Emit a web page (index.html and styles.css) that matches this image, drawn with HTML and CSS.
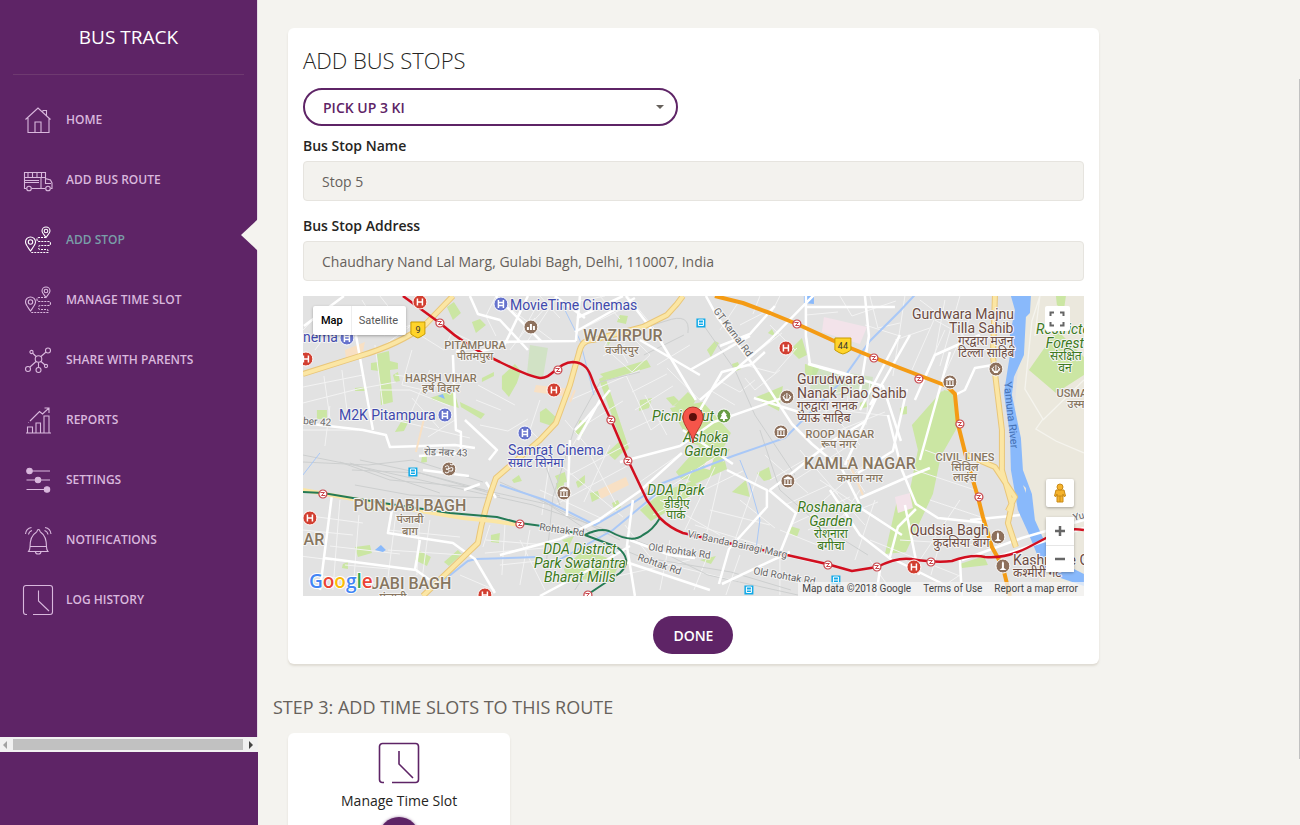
FILE: index.html
```html
<!DOCTYPE html>
<html lang="en">
<head>
<meta charset="utf-8">
<title>Bus Track</title>
<link rel="stylesheet" href="styles.css">
</head>
<body>
<div class="layout">
  <aside class="sidebar">
    <div class="sidebar-scroll">
      <a class="brand" href="#">BUS TRACK</a>
      <ul class="nav">
        <li><a class="nav-link" href="#"><svg class="nav-icon" viewBox="0 0 32 32"><path d="M3.500 15.500 16 4l12.500 11.500M6 14v14.500h21V14M13 28.500V18h6v10.500M21 7.500V6.500h3.500V11.500"/></svg>HOME</a></li>
        <li><a class="nav-link" href="#"><svg class="nav-icon" viewBox="0 0 32 32"><path d="M4 24.500H2.500V8.500h21v6l5 1.500 1.500 3v5.500h-1M9.500 24.500h13.500M2.500 13.500h21M6 9v4M10.500 9v4M15 9v4M19.500 9v4M3 16.500h14M3 18.500h14M19 14v10M23.500 14.500v5H29"/><circle cx="7" cy="24.500" r="2.300"/><circle cx="26" cy="24.500" r="2.300"/></svg>ADD BUS ROUTE</a></li>
        <li class="active"><a class="nav-link" href="#"><svg class="nav-icon" viewBox="0 0 32 32"><path d="M8.500 27C5.500 22.500 3.500 20.500 3.500 18a5 5 0 0 1 10 0c0 2.500-2 4.500-5 9zM24 13.500c-2-3-4-4.500-4-6.500a4 4 0 0 1 8 0c0 2-2 3.500-4 6.500z"/><circle cx="8.500" cy="18" r="2.200"/><circle cx="24" cy="7" r="1.800"/><path stroke-dasharray="2 1" d="M24 13.500h-7q-2 0-2 2t2 2h9.500q2 0 2 2t-2 2h-8q-2 0-2 2t2 2h6q2 0 1.500 3H9"/></svg>ADD STOP</a></li>
        <li><a class="nav-link" href="#"><svg class="nav-icon" viewBox="0 0 32 32"><path d="M8.500 27C5.500 22.500 3.500 20.500 3.500 18a5 5 0 0 1 10 0c0 2.500-2 4.500-5 9zM24 13.500c-2-3-4-4.500-4-6.500a4 4 0 0 1 8 0c0 2-2 3.500-4 6.500z"/><circle cx="8.500" cy="18" r="2.200"/><circle cx="24" cy="7" r="1.800"/><path stroke-dasharray="2 1" d="M24 13.500h-7q-2 0-2 2t2 2h9.500q2 0 2 2t-2 2h-8q-2 0-2 2t2 2h6q2 0 1.500 3H9"/></svg>MANAGE TIME SLOT</a></li>
        <li><a class="nav-link" href="#"><svg class="nav-icon" viewBox="0 0 32 32"><circle cx="16.500" cy="15" r="3.300"/><circle cx="26" cy="6.500" r="2.500"/><circle cx="9.500" cy="8" r="1.600"/><circle cx="6" cy="25" r="2.500"/><circle cx="16.500" cy="26" r="2.500"/><circle cx="24" cy="22" r="1.600"/><path d="m19 12.500 5-4.500M14 12.500l-3.500-3.500M14 17.500l-6 5.500M16.500 18.500v5M19 17.500l4 3.500"/></svg>SHARE WITH PARENTS</a></li>
        <li><a class="nav-link" href="#"><svg class="nav-icon" viewBox="0 0 32 32"><path d="M4 29h25M5.500 29v-6h5v6M14 29V19h4.500v10M22 29V12h5v17M8 17l9.500-9.500 3 2.500L27 4M22.500 4H27v5M6.500 18.500h.5"/></svg>REPORTS</a></li>
        <li><a class="nav-link" href="#"><svg class="nav-icon" viewBox="0 0 32 32"><path d="M4.500 7h23.500M4.500 16h23.500M4.500 25.500h23.500"/><circle class="solid" cx="7.500" cy="7" r="2.700"/><circle class="solid" cx="16" cy="16" r="2.700"/><circle class="solid" cx="25" cy="25.500" r="2.700"/></svg>SETTINGS</a></li>
        <li><a class="nav-link" href="#"><svg class="nav-icon" viewBox="0 0 32 32"><path d="M6.500 27.500h19.500q-1.500-2-1.500-4.500 0-11-5.500-14.500-1-.5-1.300-2-.4-1-1.200-1t-1.200 1q-.3 1.500-1.300 2Q8 12 8 23q0 2.500-1.500 4.500zM8 22.500h16.500M13.500 28q0 2 2.700 2t2.700-2M3.500 10Q4 4.500 9.500 3.500M6.500 10.500q.5-3 3.500-4M29 10q-.5-5.500-6-6.500M26 10.500q-.5-3-3.500-4"/></svg>NOTIFICATIONS</a></li>
        <li><a class="nav-link" href="#"><svg class="nav-icon" viewBox="0 0 32 32"><path d="M5 30.500H4a2.500 2.500 0 0 1-2.500-2.500V4A2.500 2.500 0 0 1 4 1.500h24A2.500 2.500 0 0 1 30.500 4v24a2.500 2.500 0 0 1-2.500 2.500H11M16.500 6.500V17l10.500 10"/></svg>LOG HISTORY</a></li>
      </ul>
    </div>
    <div class="scrollbar">
      <svg class="scroll-arrow" viewBox="0 0 6 8"><path fill="#a3a3a3" d="M5 0v8L1 4z"/></svg>
      <span class="scroll-thumb"></span>
      <svg class="scroll-arrow" viewBox="0 0 6 8"><path fill="#444" d="M1 0v8l4-4z"/></svg>
    </div>
  </aside>

  <main class="main">
    <form class="card stop-card">
      <h1 class="title">ADD BUS STOPS</h1>
      <div class="select-wrap">
        <select class="route-select" aria-label="Route"><option>PICK UP 3 KI</option></select>
        <svg class="caret" viewBox="0 0 8 4"><path d="M0 0h8L4 4z"/></svg>
      </div>
      <label class="label" for="stop-name">Bus Stop Name</label>
      <input class="input" id="stop-name" type="text" value="Stop 5">
      <label class="label" for="stop-address">Bus Stop Address</label>
      <input class="input" id="stop-address" type="text" value="Chaudhary Nand Lal Marg, Gulabi Bagh, Delhi, 110007, India">

      <div class="map">
        <svg class="map-canvas" viewBox="303 296 781 300" preserveAspectRatio="xMidYMid slice">
          <defs>
            <g id="hosp"><circle r="7" fill="#d23f31" stroke="#fff"/><path d="M-2.500-3.500v7M2.500-3.500v7M-2.500 0h5" stroke="#fff" stroke-width="1.500"/></g>
            <g id="metro"><circle r="4" fill="#fff" stroke="#c8444a" stroke-width="1.200"/><path d="M-2.500-1.500h4l-3 3h4" fill="none" stroke="#c8444a"/></g>
            <g id="cine"><circle r="7" fill="#6673cc" stroke="#fff"/><path d="M-2.500-4v8M2.500-4v8M-2.500-1.500h5M-2.500 1.500h5" stroke="#fff" stroke-width="1.500"/></g>
            <g id="museum"><circle r="7" fill="#8d705c" stroke="#fff"/><path d="M-4-2 0-4l4 2zM-4 3.500h8M-3-1v4M0-1v4M3-1v4" fill="#fff" stroke="#fff" stroke-width="1.200"/></g>
            <g id="temple"><circle r="7" fill="#8d705c" stroke="#fff"/><path d="M0-4v8M-2 3.500h4M-2-2.500a3 3 0 1 0 4 0M-4-1q0 4 4 4t4-4" fill="none" stroke="#fff"/></g>
            <g id="tower"><circle r="7" fill="#8d705c" stroke="#fff"/><path d="M-3.500 4h7L1 2V-3L0-5l-1 2v5z" fill="#fff"/></g>
            <g id="bus"><rect x="-4.500" y="-4.500" width="9" height="9" fill="#10a9e8"/><path d="M-2.500-3h5v5.500h-5zM-2.500 0h5" fill="none" stroke="#fff"/></g>
          </defs>
          <rect x="303" y="296" width="781" height="300" fill="#e2e2e2"/>
          <path fill="#ebe8dd" d="M1024 296h60v300h-45l0-50-16-62-8-80z"/>
          <g fill="#cbe6a3">
            <path d="m447 307 7-5 7 11-8 7zM377 354l12-3 1 10 8 2v6l-8 1 3 32-12 3-2-34-8-1v-7l7-1zM393 375l5-3 2 9-5 1zM355 388l10-1v4h-10zM317 410h10v9h-10zM430 398l24-8 5 18-26-8zM401 422l8-1-5 10-9 1zM460 402l25 12-4 5-20-12zM482 378l12-6v4l-12 6zM472 322l8-3 6 6-10 8z"/>
            <path d="m502 376 13-12 6 7-4 12-8 14-7-8zM540 412l6-4 11 10-5 8-12-4zM600 374l47-14 4 7-44 13zM599 379l6-3 24 72-4 4zM640 400l12-2-3 10-10 3zM620 315l8 1-2 8-9-2zM580 420l7 3-5 13-7-3zM613 338l-6 3 1 5z"/>
            <path d="m674 406 14-14 8 8-8 12zM670 408l33-6 28 31-10 20-30-10zM700 445l30 4-12 21-36 10-6-8zM666 398l8-2 5 5-6 5zM754 398l29-12-4 25zM790 350l12-12 5 17-8 4zM805 364l15 3-6 13-9-6zM707 350l8-9 4 2-8 14zM732 364l6-2 3 7-7 3zM768 333l4-4 4 8z"/>
            <path d="m944 390 9 2 4 36-16 28-8 38-27 58-21 2 12-53 12-5 12-46 4-20zM912 425l30-34 8 4-12 55-28 40 8-40zM900 408l7-2v8l-7 1zM1029 370l28-40 27 27v18l-28 18zM1056 296h10l-2 14-7-5z"/>
            <path d="m607 453 14-13 6 8-12 12zM576 482l9-7v8l-7 5zM556 483l8-1v10h-7zM612 503l6-3 3 7-6 4zM640 510l15-12 18-10 20-7 9 10-25 12-12 10-14 8zM687 479l38-18 2 8-32 15zM732 492l14-12 4 17zM757 473l12-6 3 12-8 2zM583 550l38 12-8 15-45 4-4-12zM562 540l12-4-5 10zM590 493l8-2 2 7-8 4z"/>
            <path d="m355 547 15-2 2 8-14 4zM343 564l5-2v7l-6-1zM418 550l13 7-4 9-12-6zM444 562l14-12 4 4-13 12zM491 535l9-2-1 10-8-1zM366 507h8v4h-9zM422 457l5-2v7l-6 1zM512 480l7-5 3 6-8 2zM555 476l10-4 2 10-8 2zM790 526l10 3-3 8-9-4zM960 564l24-8 4 9-26 3zM700 560l16-4-5 8zM812 408l5-2 1 8-6 2zM860 403l6-3 1 7-7 2z"/>
          </g>
          <g fill="#f3e3ea"><path d="m824 317 43 10-7 17-38-12zM895 497l15-4 3 15-15 5zM706 462l8-4-4 12-7-2z"/></g>
          <g fill="#f8e0c4"><path d="m536 385 36 4-2 8-36-5zM598 490l28-13 3 8-28 14zM345 350l20-8-2 10-17 6z"/></g>
          <g fill="#bde2a1" opacity=".45"><path d="m813 367 60 10-3 22-60-8zM530 345l18 3-5 30-16-4z"/></g>

          <!-- minor streets -->
          <g fill="none" stroke="#f3f3f3" stroke-width="1">
            <path d="m303 330 24-24M315 350l33-44M303 403l55-14 38-7M303 387l60-12M324 376l6 42M342 370l6 48M362 300l22 35 27-10M380 296l24 30M375 345l8 60M303 430h55M330 406l-5 40M420 335l24 15 8-18 26 12M412 350l-10 35 34 8M430 370l-20 45M412 325l-30 22M455 420l-27 17M412 398l27 30M478 385l37 20M476 400l25 10M480 425l28 6 20-12M370 415l38 8 62 15M380 390h30l40 16M395 375l44 6"/>
            <path d="m496 296-10 20 10 20M512 310l40 30M555 300l-28 42M540 296l20 22M518 340l22-40M580 330l50-25M560 305l45-9M600 296l20 23M628 296l26 32M610 337l15-7 25 25-18 17-28-25zM618 345l10 18M603 356l22-12M570 400l70-30M585 425l38-24M626 375l25 55 25-18M632 392l35-18M635 410l38-24M565 420l30 35M600 400l-27 45M630 430l25-12M690 345l-33 20M700 400l-33-32M645 395l22 40M540 400l-10 30 8 8M510 350l25-32M530 325l25-28"/>
            <path d="m740 325 35-18M728 347l24-14M760 350l22-17M745 365l30 8 22-25M760 296l-7 18M780 296l-10 20M740 300l-20 30M770 325l25 25M745 378l10 12 25-20M718 380l22 12 15-12M710 390l25 15M806 315l32-3M840 296l12 20 44-15M870 296l8 32 22-5M865 325l35 11M895 340l35-12M905 296l-12 80M920 300l40 30M912 370l22-50M925 375l20-45M935 320l40 22M945 300l-10 55M960 296l-20 70M970 318l-25 55M800 400l55-10 42 4M830 385l-5 35M850 370l-3 40M870 380l-4 45M820 408l70 8M840 430l45-18M860 445l-25-28"/>
            <path d="m303 515 60 8M303 530l50 5M340 500l-7 90M359 515l-5 64M330 546l70 8M315 575l60 8M396 514l-8 64M420 515l-3 60M388 550l75 5M388 530l72 7M430 520l-8 60M470 548l-38 38M345 565l45 4M486 540l60 5M490 525l-7 22M505 525l-3 50M530 530l-10 55M485 553l60-5M500 565l48-5M460 575l35 15M520 540l25 50M300 556l32 4"/>
            <path d="m545 452 78 65M570 475l60-32M555 505l74-40M550 460l-8 55M588 450l28 54M610 445l-26 57M540 490l65 30M640 482l40-28M650 500l70-46M670 520l22-50M685 530l30-63M660 500l60 35M653 515l90-44M707 532l14-60M735 540l24-68M695 525l65 20M710 510l60 15M740 500l35 28M625 525l30 38M670 540l-10 50M710 550l-16 40M740 555l-14 40M760 550l60 14M780 530l45 18M650 560l90 22M600 580l90-20"/>
            <path d="m765 455 43 38M770 480l60-35M800 450l38 44M830 440l35 52M850 445l-55 35M870 460l-46 40M785 505l44-20 36 40M790 525l60-28M820 480l60 40M808 530l70-28M860 490l-40 60M875 500l-20 60M870 540l90 36M915 470l60 20M925 450l55 20M930 500l60 20M960 500l-40 60M945 525l-14 50M960 575l-30 20M870 560l25 36M840 575l-10 21M900 540l80 5M780 555v40"/>
          </g>
          <!-- rail corridors -->
          <g fill="none" stroke="#cdcfcf" stroke-width="1">
            <path d="m303 462 65 3 45-5 70 22M340 462l50 18 80 7 90 20M352 470l68 3 65 17M355 485l55 10 80 3M350 463l90 30M360 460l60 13 80 23M303 455l50 10 180 40 60 20 55 20 60 30 90 20M500 482l45 20 60 40 36 15 90 15 60 18M540 500l80 40M640 372l-40 10-25 45-22 70-7 70M600 550l-25 40M700 320l35 50 20 45 40 60M620 335l46-14q25-9 22 12M644 355l40-20M760 430l20 60 40 35 48 30M540 450l20 55"/>
          </g>
          <!-- canals and river -->
          <g fill="none" stroke="#a9c8f7" stroke-width="2">
            <path stroke-width="1" d="m303 475 17-22M560 300l20 40 14 55M740 460l10 25 10 35-4 30"/>
            <path d="M500 485l45 15 50 25 38-22 30-20 70-27 52-18 25-25 30-30 30-42 30-30 25-27M550 565l18-10 45-25 48-40M424 596l44-35 8-2 62-2"/>
          </g>
          <path fill="#89b9fb" d="m1011 296 4 14-5 25 0 20-6 38 6 42 1 35 7 40 10 22 9 22 12 20 35 12v-12l-24-12-16-22-9-20-3-26-9-24-2-32-9-43 2-18 10-22 2-38 4-4 1-17z"/>
          <path fill="#89b9fb" d="m375 550 6-5 5 5-3 2zM438 396l5-2 2 5zM804 296h10v8l-10-1z"/>
          <path fill="#ebe8dd" d="m1023 485 3 3v5z"/>

          <!-- white streets -->
          <g fill="none" stroke="#fff" stroke-width="2.500" stroke-linejoin="round">
            <path d="m356 335 17 95M303 423l60 7 23 5 4 12 65-2 20 3M453 355l3 75 5 2 0 21-42 3M344 296l-40 30M456 352l35-10 85-1M470 296l8 18 22 6 28 30M528 296l-24 50-46 10M496 296l46 46M580 296l-4 45M585 318l-30-22M575 332l60-34M577 318l46-22M626 296l34 44 36 60"/>
            <path d="m332 495-12 95M324 558l92 12 14 10M392 510l-4 23 65 10 22 16 20 34M420 540l-5 30M486 482l10 16M423 470l46 6M465 420l32 30-8 10M464 490l16-6"/>
            <path d="m570 440-3 76M500 555l60-16 40-20 40-28 42-38M540 596l60-32 30-18M620 560l90 30M630 540l40 15 25 3M600 520l-30 15M600 400l-22 40M633 500l-6 46 8 50M620 462l60-16 34-24 80-28M727 470l40 20 0 17-38 42-10 35M769 490l27 23-16 40M722 584l68-32M770 490l12-9 50-40 34-20M575 430l10-10 25-30M640 340l60 35"/>
            <path d="m706 296 12 22 36 48 38 58 20 20 30 25 20 40 40 26M700 410l22-38 30-8 13-12M720 346l30-12 25-28M806 296l0 40 4 28 44 12M805 307h90M865 296l4 40-10 62M870 405l40-70M700 400l70-60M754 398l45 14M683 430l50 34M770 340l44-45M690 370l60-34M900 335l-40 75M880 390l-35 75M808 364l75 22 18 55"/>
            <path d="m858 473 35-22 14-62M860 498l50-22 20-8M888 415l14 55 14 34 22 14 48 5M890 557l8-30 18-18M905 505l14 70M830 490l30 45 32 25M895 560l50 25M880 570l-4 26M960 560l2 36M915 400l20-45 45-20M920 460l30-108M955 395l10-5 10-22 18-3M970 520l50-5M962 560l60-22 62-18M1000 556l84-28"/>
          </g>
          <g fill="none" stroke="#f5f4ee" stroke-width="1.300"><path d="m1040 296-8 25-7 68 18 30-7 10 20 12 28 12M1043 420l41-40M1040 296l-5 40"/></g>

          <!-- arterial roads -->
          <g fill="none" stroke-linejoin="round">
            <path stroke="#e9c679" stroke-width="6" d="m303 374 57-18q40-12 65-31l28-29M423 596l27-26 28-27q5-30 18-65l44-38 16-17 14-38 9-32q3-14 14-13l50-13 24-12 10-11 6-8M995 296l-2 60 9 74v40l10 35-4 18 8 24M967 455l28 12 20 30-7 14"/>
            <path stroke="#fbe6a4" stroke-width="4" d="m303 374 57-18q40-12 65-31l28-29M423 596l27-26 28-27q5-30 18-65l44-38 16-17 14-38 9-32q3-14 14-13l50-13 24-12 10-11 6-8M995 296l-2 60 9 74v40l10 35-4 18 8 24M967 455l28 12 20 30-7 14"/>
            <path stroke="#fbe6a4" stroke-width="4" d="m303 490 100 18 60 10 30 3 27 4"/>
            <path stroke="#f8e0c4" stroke-width="2" d="m425 415-9 37M575 390l-5 12M848 460l15 35"/>
            <path stroke="#f49b14" stroke-width="4" d="m715 296 28 7 27 10 27 11 46 21 57 23 47 18 8 8 3 30 9 36 11 37 5 20 9 30 11 20 7 29"/>
            <path stroke="#247a55" stroke-width="2" d="m303 492 20 1 60 10 67 10 47 4 23 6 22 3 43 9q14-7 24-4 23 13 34 4 10-5 17-17M585 535l32 12q17 13 3 26l-30 20"/>
            <path stroke="#d20f1f" stroke-width="2.500" d="m403 296 37 27q28 25 60 39 30 15 40 16c12 1 18-16 33-16 17 1 17 14 22 24l16 34 17 40 19 40 13 18q10 10 23 15l50 11 54 11 40 9 25 7 25-4q20-10 34-8 25 4 41 2 20-7 33-4 20 2 42-9l23-12q17-9 34-6"/>
          </g>

          <use href="#hosp" x="420" y="302"/><use href="#hosp" x="306" y="359"/><use href="#hosp" x="554" y="390"/><use href="#hosp" x="786" y="348"/><use href="#hosp" x="310" y="518"/><use href="#hosp" x="485" y="595"/><use href="#hosp" x="914" y="567"/>
          <use href="#metro" x="440" y="323"/><use href="#metro" x="558" y="370"/><use href="#metro" x="611" y="420"/><use href="#metro" x="628" y="461"/><use href="#metro" x="797" y="324"/><use href="#metro" x="874" y="358"/><use href="#metro" x="919" y="379"/><use href="#metro" x="960" y="424"/><use href="#metro" x="979" y="497"/><use href="#metro" x="323" y="494"/><use href="#metro" x="520" y="524"/><use href="#metro" x="588" y="595"/><use href="#metro" x="828" y="565"/><use href="#metro" x="877" y="567"/><use href="#metro" x="931" y="562"/>
          <use href="#cine" x="501" y="304"/><use href="#cine" x="347" y="338"/><use href="#cine" x="445" y="415"/><use href="#cine" x="525" y="433"/>
          <circle cx="531" cy="327" r="7" fill="#8d705c" stroke="#fff"/><path d="M528 330v-3M531 330v-6M534 330v-4" stroke="#fff" stroke-width="2"/>
          <use href="#museum" x="564" y="493"/><use href="#museum" x="781" y="432"/><use href="#museum" x="788" y="481"/><use href="#museum" x="950" y="382"/>
          <circle cx="449" cy="469" r="7" fill="#8d705c" stroke="#fff"/><path d="M445 467q4-3 4 1-1 2-3 1 4 0 3 3-2 2-4 0M449 469q4-3 4 0t-3 2M450 464q2 2 4 0" fill="none" stroke="#fff"/>
          <use href="#temple" x="787" y="397"/><use href="#temple" x="996" y="369"/>
          <use href="#tower" x="998" y="537"/><use href="#tower" x="1003" y="566"/>
          <use href="#bus" x="701" y="323"/><use href="#bus" x="413" y="472"/><use href="#bus" x="749" y="590"/><use href="#bus" x="836" y="580"/>
          <circle cx="724" cy="416" r="7" fill="#689c45" stroke="#fff"/><path fill="#fff" d="m724 411 3 4h-1l2 4h-3v2h-2v-2h-3l2-4h-1z"/>
          <g stroke="#c89b00" fill="#ffd42a"><path d="M411 322h14v12q-4 3-7 4-3-1-7-4zM835 338h16v12q-4 3-8 4-4-1-8-4z"/></g>
          <g class="shield"><text x="418" y="333">9</text><text x="843" y="349">44</text></g>

          <g class="place violet">
            <text x="510" y="310">MovieTime Cinemas</text><text x="303" y="342">nema</text><text x="339" y="420">M2K Pitampura</text><text x="508" y="455">Samrat Cinema</text><text class="hindi" x="508" y="467">सम्राट सिनेमा</text>
          </g>
          <g class="place area">
            <text class="large" x="623" y="341">WAZIRPUR</text><text class="hindi" x="622" y="354">वजीरपुर</text>
            <text x="475" y="349">PITAMPURA</text><text class="hindi" x="475" y="360">पीतमपुरा</text>
            <text x="441" y="382">HARSH VIHAR</text><text class="hindi" x="441" y="392">हर्ष विहार</text>
            <text x="840" y="438">ROOP NAGAR</text><text class="hindi" x="839" y="448">रूप नगर</text>
            <text class="large" x="860" y="469">KAMLA NAGAR</text><text class="hindi" x="860" y="482">कमला नगर</text>
            <text x="965" y="461">CIVIL LINES</text><text class="hindi" x="965" y="471">सिविल</text><text class="hindi" x="965" y="481">लाइंस</text>
            <text class="large" x="410" y="511">PUNJABI BAGH</text><text class="hindi" x="410" y="523">पंजाबी</text><text class="hindi" x="410" y="535">बाग</text>
            <text class="large" x="314" y="545">AR</text><text class="large" x="411" y="589">JABI BAGH</text><text class="hindi" x="393" y="601">पंजाबी</text>
            <text x="1072" y="397">USMA</text><text class="hindi" x="1076" y="408">उस्म</text>
          </g>
          <g class="place park">
            <text x="683" y="421">Picnic Hut</text><text x="706" y="442">Ashoka</text><text x="706" y="456">Garden</text>
            <text x="676" y="495">DDA Park</text><text class="hindi" x="677" y="508">डीडीए</text><text class="hindi" x="676" y="519">पार्क</text>
            <text x="830" y="512">Roshanara</text><text x="831" y="526">Garden</text><text class="hindi" x="831" y="538">रोशनारा</text><text class="hindi" x="831" y="550">बगीचा</text>
            <text x="580" y="554">DDA District</text><text x="580" y="568">Park Swatantra</text><text x="580" y="582">Bharat Mills</text>
            <text x="1063" y="334">Restricte</text><text x="1065" y="348">Forest</text><text class="hindi" x="1066" y="360">संरक्षित</text><text class="hindi" x="1065" y="372">वन</text>
          </g>
          <g class="place poi">
            <text x="797" y="384">Gurudwara</text><text x="797" y="398">Nanak Piao Sahib</text><text class="hindi" x="797" y="410">गुरुद्वारा नानक</text><text class="hindi" x="797" y="422">प्याऊ साहिब</text>
            <text x="912" y="319">Gurdwara Majnu</text><text x="949" y="333">Tilla Sahib</text><text class="hindi" x="958" y="345">गुरद्वारा मजनू</text><text class="hindi" x="958" y="357">टिल्ला साहिब</text>
            <text x="910" y="535">Qudsia Bagh</text><text class="hindi" x="933" y="547">कुदसिया बाग</text>
            <text x="1013" y="565">Kashmere Gate</text><text class="hindi" x="1013" y="577">कश्मीरी गेट</text>
          </g>
          <g class="place road">
            <text transform="translate(713 311) rotate(53)">GT Karnal Rd</text><text transform="translate(303 424) rotate(4)">ber 42</text><text transform="translate(424 455) rotate(2)">रोड नंबर 43</text>
            <text transform="translate(539 530) rotate(8)">Rohtak Rd</text><text transform="translate(648 550) rotate(8)">Old Rohtak Rd</text><text transform="translate(637 560) rotate(19)">Rohtak Rd</text><text transform="translate(687 537) rotate(12)">Vir Banda Bairagi Marg</text><text transform="translate(753 574) rotate(10)">Old Rohtak Rd</text><text transform="translate(1074 521) rotate(-15)">Yu</text>
            <text class="river" transform="translate(1004 382) rotate(84)">Yamuna River</text>
          </g>
          <path d="M693 443c-1-11-10-17-10-26a10 10 0 0 1 20 0c0 9-9 15-10 26z" fill="#f5554a" stroke="#b6342b"/><circle cx="693" cy="417" r="4" fill="#5c0e0a"/>
          <text class="google" x="309" y="588"><tspan fill="#4285f4">G</tspan><tspan fill="#ea4335">o</tspan><tspan fill="#fbbc05">o</tspan><tspan fill="#4285f4">g</tspan><tspan fill="#34a853">l</tspan><tspan fill="#ea4335">e</tspan></text>
        </svg>
        <div class="map-types"><button type="button" class="map-type current">Map</button><button type="button" class="map-type">Satellite</button></div>
        <button type="button" class="map-button fullscreen" aria-label="Toggle fullscreen"><svg viewBox="0 0 16 16"><path d="M1.500 5V1.500H5M11 1.500h3.500V5M14.500 11v3.500H11M5 14.500H1.500V11" fill="none" stroke="#666" stroke-width="2"/></svg></button>
        <div class="map-tools">
          <button type="button" class="map-button" aria-label="Street view"><svg viewBox="0 0 16 20"><path d="M4 7h8l1.500 6-1.500.5L11 11v8H5v-8l-1 2.500-1.500-.5z" fill="#f5b32c" stroke="#c98a16"/><circle cx="8" cy="4" r="3" fill="#f5b32c" stroke="#c98a16"/><path d="M5 13h6M8 13v6" stroke="#c98a16"/></svg></button>
          <div class="zoom"><button type="button" aria-label="Zoom in"><svg viewBox="0 0 12 12"><path d="M6 1v10M1 6h10"/></svg></button><button type="button" aria-label="Zoom out"><svg viewBox="0 0 12 12"><path d="M1 6h10"/></svg></button></div>
        </div>
        <div class="map-legal"><span>Map data ©2018 Google</span><a href="#">Terms of Use</a><a href="#">Report a map error</a></div>
      </div>
      <button type="button" class="done">DONE</button>
    </form>

    <h2 class="step">STEP 3: ADD TIME SLOTS TO THIS ROUTE</h2>
    <section class="card slot-card">
      <svg class="slot-icon" viewBox="0 0 42 42"><path d="M6 40.500H4.500a3 3 0 0 1-3-3v-33a3 3 0 0 1 3-3h33a3 3 0 0 1 3 3v33a3 3 0 0 1-3 3H14M21 9v13l14 14"/></svg>
      <p class="slot-name">Manage Time Slot</p>
      <button type="button" class="slot-add" aria-label="Add time slot"></button>
    </section>
  </main>
  <span class="page-thumb"></span>
</div>
</body>
</html>
```
FILE: styles.css
```css
* { box-sizing: border-box; }
body { margin: 0; background: #f4f3ef; color: #252422; font-family: "Open Sans", "Noto Sans", sans-serif; font-size: 14px; }
a { color: inherit; text-decoration: none; }
button, input, select { font: inherit; }
button { padding: 0; border: 0; cursor: pointer; }

.layout { display: flex; height: 100vh; overflow: hidden; position: relative; }
.sidebar { flex: 0 0 258px; background: #5e2466; color: #d9b8dd; }
.sidebar-scroll { height: 737px; padding: 0 13px; border-right: 1px solid #e6dbe6; }
.brand { display: block; height: 75px; line-height: 74px; border-bottom: 1px solid #6e3a70; text-align: center; font-size: 19px; color: #fff; }
.nav { list-style: none; margin: 15px 0 0; padding: 0; }
.nav-link { display: flex; align-items: center; gap: 12px; height: 60px; padding: 0 0 1px 9px; font-size: 12px; font-weight: 600; }
.nav-icon { width: 32px; height: 32px; fill: none; stroke: currentColor; stroke-width: 1.1; }
.nav-icon .solid { fill: currentColor; }
.active { position: relative; }
.active .nav-link { color: #7a9ea8; }
.active .nav-icon { color: #fff; }
.active::after { content: ""; position: absolute; right: -14px; top: 9px; border: solid transparent; border-width: 16px 17px 16px 0; border-right-color: #f4f3ef; }

.scrollbar { display: flex; align-items: center; justify-content: space-between; gap: 5px; height: 15px; padding: 0 4px 0 2px; background: #f1f1f1; }
.scroll-arrow { width: 6px; height: 8px; }
.scroll-thumb { flex: 1; height: 11px; background: #c1c1c1; }
.page-thumb { position: absolute; right: 0; top: 79px; width: 1px; height: 680px; background: #c1c1c1; }

.main { flex: 1; min-width: 0; padding: 28px 18px 0 15px; overflow: hidden; }
.card { background: #fff; border-radius: 6px; box-shadow: 0 2px 2px rgba(204, 197, 185, .5); margin: 0 15px; }
.stop-card { width: calc(83.333% - 30px); padding: 15px 15px 10px; display: flex; flex-direction: column; }
.title { margin: 0 0 10px; font-size: 22px; line-height: 35px; font-weight: 300; }
.select-wrap { position: relative; width: 48%; }
.route-select { display: block; width: 100%; height: 38px; padding: 0 18px; border: 2px solid #5e2466; border-radius: 20px; background: #fff; color: #5e2466; font-weight: 600; appearance: none; }
.caret { position: absolute; right: 14px; top: 17px; width: 8px; height: 4px; fill: #66615b; }
.label { margin: 10px 0 5px; line-height: 20px; font-weight: 600; }
.input { height: 40px; padding: 0 18px; border: 1px solid #e6e4df; border-radius: 4px; background: #f3f2ee; color: #66615b; }
.input + .label { margin-top: 15px; }

.map { position: relative; height: 300px; margin: 15px 0 20px; overflow: hidden; font-family: Roboto, "Noto Sans", sans-serif; }
.map-canvas { display: block; width: 100%; height: 100%; }
.place text, .google, .shield text { paint-order: stroke; stroke-linejoin: round; }
.place text { font-size: 14px; stroke: #f4f4f4; stroke-width: 2px; }
.place .hindi { font-size: 12px; }
.violet { fill: #4049ac; }
.poi { fill: #6c4b42; }
.area { fill: #87765f; text-anchor: middle; font-weight: 500; }
.area text, .area .hindi { font-size: 11px; }
.area .large { font-size: 16px; }
.park { fill: #3c7a20; text-anchor: middle; font-style: italic; }
.park .hindi { font-style: normal; }
.road text { font-size: 10px; fill: #666; }
.road .river { font-size: 11px; fill: #4571b5; stroke: none; }
.shield text { font-size: 9px; text-anchor: middle; fill: #333; }
.google { font-family: "Open Sans", sans-serif; font-size: 19px; font-weight: 600; stroke: #fff; stroke-width: 2px; }

.map-types { position: absolute; left: 10px; top: 10px; display: flex; height: 29px; background: #fff; border-radius: 2px; box-shadow: 0 1px 3px rgba(0, 0, 0, .3); }
.map-type { padding: 0 8px; background: none; font-size: 11px; color: #565656; }
.map-type + .map-type { padding-left: 7px; border-left: 1px solid #eee; }
.map-type.current { color: #000; font-weight: 500; }
.map-button, .zoom button { display: grid; place-items: center; width: 28px; height: 28px; background: #fff; }
.map-button { border-radius: 2px; box-shadow: 0 1px 3px rgba(0, 0, 0, .3); }
.map-button svg { width: 16px; height: 20px; }
.fullscreen { position: absolute; right: 14px; top: 10px; width: 25px; height: 25px; box-shadow: none; }
.map-tools { position: absolute; right: 10px; bottom: 24px; display: grid; gap: 10px; }
.zoom { background: #fff; border-radius: 2px; box-shadow: 0 1px 3px rgba(0, 0, 0, .3); }
.zoom button + button { height: 27px; border-top: 1px solid #e6e6e6; }
.zoom svg { width: 12px; height: 12px; stroke: #666; stroke-width: 2.5; }
.map-legal { position: absolute; right: 0; bottom: 0; display: flex; gap: 12px; padding: 0 6px 0 4px; line-height: 14px; font-size: 10px; color: #444; background: rgba(245, 245, 245, .75); }

.done { align-self: center; width: 80px; height: 38px; border-radius: 20px; background: #5e2466; color: #fff; font-weight: 600; }
.step { margin: 29px 0 12px; font-size: 18px; line-height: 28px; font-weight: 400; color: #66615b; }
.slot-card { width: calc(25% - 30px); height: 140px; padding-top: 9px; display: flex; flex-direction: column; align-items: center; }
.slot-icon { width: 42px; height: 42px; fill: none; stroke: #5e2466; stroke-width: 1.6; }
.slot-name { margin: 6px 0; line-height: 21px; }
.slot-add { flex: none; width: 40px; height: 40px; border-radius: 50%; background: #5e2466; box-shadow: 0 0 3px rgba(94, 36, 102, .6); }
```
